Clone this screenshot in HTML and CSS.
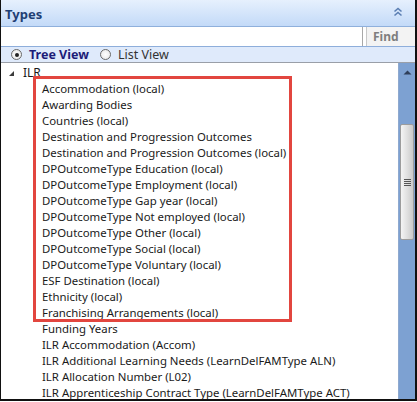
FILE: index.html
```html
<!DOCTYPE html>
<html>
<head>
<meta charset="utf-8">
<link rel="stylesheet" href="styles.css">
</head>
<body>
<div class="panel">
  <div class="header">
    <span class="title">Types</span>
    <svg class="collapse" width="10" height="10" viewBox="0 0 10 10"><path d="M1.5 4.5 L5 1.5 L8.5 4.5 M1.5 8.5 L5 5.5 L8.5 8.5" fill="none" stroke="#5b7fb3" stroke-width="1.6"/></svg>
  </div>
  <div class="search">
    <div class="input"></div>
    <div class="find">Find</div>
  </div>
  <div class="views">
    <span class="radio checked"></span><span class="lbl sel">Tree View</span>
    <span class="radio"></span><span class="lbl">List View</span>
  </div>
  <div class="body">
    <div class="tree">
      <div class="root"><svg class="exp" width="7" height="7" viewBox="0 0 7 7"><path d="M6 1 L6 6 L1 6 Z" fill="#3c3c3c"/></svg><span>ILR</span></div>
      <div class="children">
        <div class="item">Accommodation (local)</div>
        <div class="item">Awarding Bodies</div>
        <div class="item">Countries (local)</div>
        <div class="item">Destination and Progression Outcomes</div>
        <div class="item">Destination and Progression Outcomes (local)</div>
        <div class="item">DPOutcomeType Education (local)</div>
        <div class="item">DPOutcomeType Employment (local)</div>
        <div class="item">DPOutcomeType Gap year (local)</div>
        <div class="item">DPOutcomeType Not employed (local)</div>
        <div class="item">DPOutcomeType Other (local)</div>
        <div class="item">DPOutcomeType Social (local)</div>
        <div class="item">DPOutcomeType Voluntary (local)</div>
        <div class="item">ESF Destination (local)</div>
        <div class="item">Ethnicity (local)</div>
        <div class="item">Franchising Arrangements (local)</div>
        <div class="item">Funding Years</div>
        <div class="item">ILR Accommodation (Accom)</div>
        <div class="item">ILR Additional Learning Needs (LearnDelFAMType ALN)</div>
        <div class="item">ILR Allocation Number (L02)</div>
        <div class="item">ILR Apprenticeship Contract Type (LearnDelFAMType ACT)</div>
      </div>
      <div class="highlight"></div>
    </div>
    <div class="scrollbar">
      <div class="up"><svg width="9" height="5" viewBox="0 0 9 5"><path d="M0.5 4.5 L4.5 0.5 L8.5 4.5 Z" fill="#2f3f5a"/></svg></div>
      <div class="gap1"></div>
      <div class="thumb"><span></span><span></span><span></span><span></span></div>
      <div class="rest"></div>
    </div>
  </div>
</div>
</body>
</html>
```
FILE: styles.css
```css
html, body {
  margin: 0;
  padding: 0;
  background: #ffffff;
}
.panel {
  width: 414px;
  height: 399px;
  border-left: 1px solid #111;
  border-right: 2px solid #111;
  border-bottom: 2px solid #111;
  display: flex;
  flex-direction: column;
  font-family: "Noto Sans", "Open Sans", sans-serif;
  font-size: 11.4px;
  overflow: hidden;
}
.header {
  height: 26px;
  background: linear-gradient(#e6f0fd, #c3daf8);
  border-bottom: 1px solid #8fb0dc;
  display: flex;
  align-items: center;
  justify-content: space-between;
  padding: 0 12px 0 4px;
  flex: none;
}
.title {
  font-weight: bold;
  font-size: 13px;
  color: #1f3f74;
  margin-top: 1px;
}
.collapse {
  margin-top: -2px;
}
.search {
  height: 19px;
  display: flex;
  border-bottom: 1px solid #8eaedb;
  flex: none;
}
.input {
  flex: 1;
  background: #fff;
  border-right: 1px solid #a8a8a8;
}
.find {
  width: 42px;
  margin-left: 3px;
  background: #f3f3f3;
  border-left: 1px solid #c8c8c8;
  color: #7e7e7e;
  font-weight: bold;
  font-size: 12px;
  line-height: 19px;
  padding-left: 6px;
}
.views {
  height: 15px;
  background: #dfeafb;
  border-bottom: 1px solid #9a9fa8;
  display: flex;
  align-items: center;
  padding-left: 10px;
  flex: none;
}
.radio {
  width: 11px;
  height: 11px;
  border: 1px solid #6a6a6a;
  border-radius: 50%;
  background: radial-gradient(#ffffff, #e4e4e4);
  box-sizing: border-box;
  position: relative;
  margin-right: 7px;
}
.radio.checked::after {
  content: "";
  position: absolute;
  left: 2.5px;
  top: 2.5px;
  width: 4px;
  height: 4px;
  border-radius: 50%;
  background: #222;
}
.lbl {
  font-size: 12.5px;
  color: #333;
  margin-right: 11px;
}
.lbl.sel {
  font-weight: bold;
  color: #1c1c78;
}
.body {
  flex: 1;
  display: flex;
  min-height: 0;
}
.tree {
  flex: 1;
  position: relative;
  padding-top: 1px;
  color: #1a1a1a;
  line-height: 16px;
}
.root {
  display: flex;
  align-items: center;
  height: 17px;
  padding-left: 7px;
  font-size: 12px;
}
.exp {
  margin-right: 8px;
  margin-top: 1px;
}
.children {
  padding-left: 41px;
}
.item {
  height: 16px;
  white-space: nowrap;
}
.highlight {
  position: absolute;
  left: 32px;
  top: 13px;
  width: 253px;
  height: 240px;
  border: 3px solid #e2463f;
}
.scrollbar {
  width: 16px;
  background: #7da1d2;
  border-left: 1px solid #8ea9cf;
  display: flex;
  flex-direction: column;
  flex: none;
}
.up {
  height: 14px;
  display: flex;
  align-items: center;
  justify-content: center;
  padding-top: 2px;
}
.gap1 {
  height: 45px;
}
.thumb {
  height: 114px;
  margin: 0 1px;
  background: linear-gradient(90deg, #f4f4f4, #dcdcdc 60%, #c9c9c9);
  border: 1px solid #9c9c9c;
  border-radius: 2px;
  display: flex;
  flex-direction: column;
  align-items: center;
  justify-content: center;
  gap: 1px;
}
.thumb span {
  width: 7px;
  height: 1px;
  background: #555;
}
.rest {
  flex: 1;
}
```
